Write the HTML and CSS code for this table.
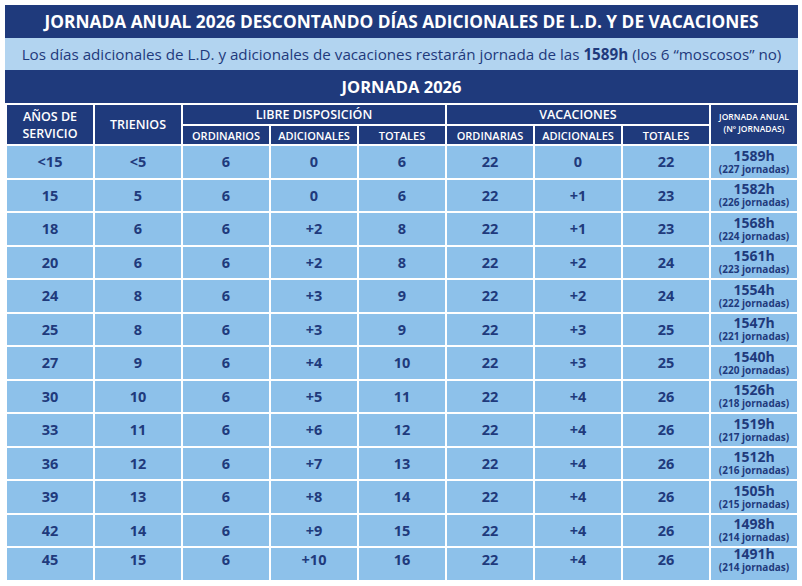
FILE: index.html
```html
<!DOCTYPE html>
<html lang="es">
<head>
<meta charset="utf-8">
<title>Jornada anual 2026</title>
<link rel="stylesheet" href="styles.css">
</head>
<body>
<div class="sheet">
  <div class="title">JORNADA ANUAL 2026 DESCONTANDO DÍAS ADICIONALES DE L.D. Y DE VACACIONES</div>
  <div class="subtitle">Los días adicionales de L.D. y adicionales de vacaciones restarán jornada de las <b>1589h</b> (los 6 “moscosos” no)</div>
  <div class="band">JORNADA 2026</div>
  <div class="grid">
    <div class="h h-tall c1">AÑOS DE<br>SERVICIO</div>
    <div class="h h-tall c2">TRIENIOS</div>
    <div class="h h-group g1">LIBRE DISPOSICIÓN</div>
    <div class="h h-group g2">VACACIONES</div>
    <div class="h h-tall c9 h-small">JORNADA ANUAL<br>(Nº JORNADAS)</div>
    <div class="h h-sub">ORDINARIOS</div>
    <div class="h h-sub">ADICIONALES</div>
    <div class="h h-sub">TOTALES</div>
    <div class="h h-sub">ORDINARIAS</div>
    <div class="h h-sub">ADICIONALES</div>
    <div class="h h-sub">TOTALES</div>

    <div class="d">&lt;15</div><div class="d">&lt;5</div><div class="d">6</div><div class="d">0</div><div class="d">6</div><div class="d">22</div><div class="d">0</div><div class="d">22</div><div class="d j"><span>1589h</span><small>(227 jornadas)</small></div>
    <div class="d">15</div><div class="d">5</div><div class="d">6</div><div class="d">0</div><div class="d">6</div><div class="d">22</div><div class="d">+1</div><div class="d">23</div><div class="d j"><span>1582h</span><small>(226 jornadas)</small></div>
    <div class="d">18</div><div class="d">6</div><div class="d">6</div><div class="d">+2</div><div class="d">8</div><div class="d">22</div><div class="d">+1</div><div class="d">23</div><div class="d j"><span>1568h</span><small>(224 jornadas)</small></div>
    <div class="d">20</div><div class="d">6</div><div class="d">6</div><div class="d">+2</div><div class="d">8</div><div class="d">22</div><div class="d">+2</div><div class="d">24</div><div class="d j"><span>1561h</span><small>(223 jornadas)</small></div>
    <div class="d">24</div><div class="d">8</div><div class="d">6</div><div class="d">+3</div><div class="d">9</div><div class="d">22</div><div class="d">+2</div><div class="d">24</div><div class="d j"><span>1554h</span><small>(222 jornadas)</small></div>
    <div class="d">25</div><div class="d">8</div><div class="d">6</div><div class="d">+3</div><div class="d">9</div><div class="d">22</div><div class="d">+3</div><div class="d">25</div><div class="d j"><span>1547h</span><small>(221 jornadas)</small></div>
    <div class="d">27</div><div class="d">9</div><div class="d">6</div><div class="d">+4</div><div class="d">10</div><div class="d">22</div><div class="d">+3</div><div class="d">25</div><div class="d j"><span>1540h</span><small>(220 jornadas)</small></div>
    <div class="d">30</div><div class="d">10</div><div class="d">6</div><div class="d">+5</div><div class="d">11</div><div class="d">22</div><div class="d">+4</div><div class="d">26</div><div class="d j"><span>1526h</span><small>(218 jornadas)</small></div>
    <div class="d">33</div><div class="d">11</div><div class="d">6</div><div class="d">+6</div><div class="d">12</div><div class="d">22</div><div class="d">+4</div><div class="d">26</div><div class="d j"><span>1519h</span><small>(217 jornadas)</small></div>
    <div class="d">36</div><div class="d">12</div><div class="d">6</div><div class="d">+7</div><div class="d">13</div><div class="d">22</div><div class="d">+4</div><div class="d">26</div><div class="d j"><span>1512h</span><small>(216 jornadas)</small></div>
    <div class="d">39</div><div class="d">13</div><div class="d">6</div><div class="d">+8</div><div class="d">14</div><div class="d">22</div><div class="d">+4</div><div class="d">26</div><div class="d j"><span>1505h</span><small>(215 jornadas)</small></div>
    <div class="d">42</div><div class="d">14</div><div class="d">6</div><div class="d">+9</div><div class="d">15</div><div class="d">22</div><div class="d">+4</div><div class="d">26</div><div class="d j"><span>1498h</span><small>(214 jornadas)</small></div>
    <div class="d last">45</div><div class="d last">15</div><div class="d last">6</div><div class="d last">+10</div><div class="d last">16</div><div class="d last">22</div><div class="d last">+4</div><div class="d last">26</div><div class="d j last"><span>1491h</span><small>(214 jornadas)</small></div>
  </div>
</div>
</body>
</html>
```
FILE: styles.css
```css
* { box-sizing: border-box; }

html, body {
  margin: 0;
  background: #ffffff;
}

body {
  padding: 5px;
  font-family: "Open Sans", "Noto Sans", "DejaVu Sans", sans-serif;
  color: #1f3a7c;
}

.sheet {
  width: 793px;
}

.title {
  height: 33px;
  background: #1f3a7c;
  color: #ffffff;
  font-weight: 700;
  font-size: 17.3px;
  display: flex;
  align-items: center;
  justify-content: center;
  white-space: nowrap;
}

.subtitle {
  height: 32px;
  background: #b2d4f0;
  color: #1f3a7c;
  font-size: 15.2px;
  display: flex;
  align-items: center;
  justify-content: center;
  white-space: nowrap;
}

.subtitle b { font-weight: 700; margin: 0 4px; }

.band {
  height: 33px;
  background: #1f3a7c;
  color: #ffffff;
  font-weight: 700;
  font-size: 16.5px;
  display: flex;
  align-items: center;
  justify-content: center;
}

.grid {
  display: grid;
  grid-template-columns: repeat(9, 86px);
  grid-template-rows: 19px 18px repeat(13, 31.5px);
  gap: 2px;
  padding: 2px 1px 0 2px;
  background: #ffffff;
}

.h {
  background: #1f3a7c;
  color: #ffffff;
  font-weight: 600;
  display: flex;
  align-items: center;
  justify-content: center;
  text-align: center;
  white-space: nowrap;
}

.h-tall {
  grid-row: span 2;
  font-size: 12.5px;
  line-height: 17px;
}

.g1 { grid-column: 3 / span 3; font-size: 12.5px; }
.g2 { grid-column: 6 / span 3; font-size: 12.5px; }

.h-sub { font-size: 11px; }

.h-small {
  font-size: 8.5px;
  line-height: 12px;
  padding-bottom: 4px;
}

.d {
  background: #8dc1ea;
  color: #1f3a7c;
  font-weight: 700;
  font-size: 14.5px;
  display: flex;
  align-items: center;
  justify-content: center;
}

.j {
  flex-direction: column;
  font-size: 14px;
}

.j span {
  line-height: 14px;
}

.j small {
  font-size: 10px;
  line-height: 12px;
}

.last { padding-bottom: 8px; }
```
